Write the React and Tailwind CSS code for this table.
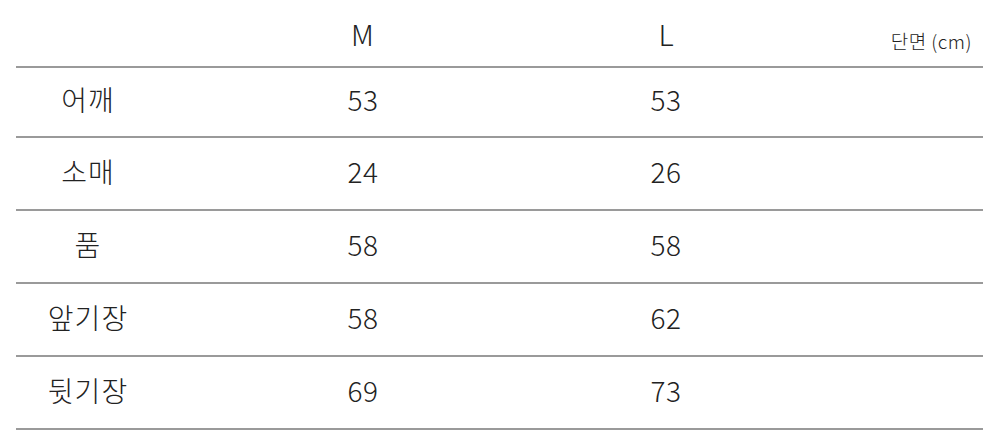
import React from 'react';

const rows = [
  { label: '어깨', m: '53', l: '53' },
  { label: '소매', m: '24', l: '26' },
  { label: '품', m: '58', l: '58' },
  { label: '앞기장', m: '58', l: '62' },
  { label: '뒷기장', m: '69', l: '73' },
];

const font = { fontFamily: '"Noto Sans CJK KR", "Noto Sans", sans-serif' };

const Rule = () => <div className="h-[2px] bg-[#9a9a9a]" />;

const App = () => {
  return (
    <div className="w-[1000px] h-[445px] bg-white text-[#222] font-light" style={font}>
      <div className="pl-[16px] pr-[17px]">
        {/* Header */}
        <div className="grid grid-cols-[144px_406px_200px_1fr] h-[66px] items-center">
          <div />
          <div className="text-center text-[29px] leading-none tracking-[1px]">M</div>
          <div className="text-center text-[29px] leading-none">L</div>
          <div className="text-right text-[19px] leading-none tracking-[0.5px] pr-[11px] pt-[14px]">단면 (cm)</div>
        </div>
        <Rule />

        {/* Rows */}
        {rows.map((row, i) => (
          <div key={row.label}>
            <div
              className={`grid grid-cols-[144px_406px_200px_1fr] items-center pb-[6px] ${
                i === 0 ? 'h-[68px]' : 'h-[71px]'
              }`}
            >
              <div className="text-center text-[28px] leading-none tracking-[1px]">{row.label}</div>
              <div className="text-center text-[28px] leading-none tracking-[0.5px]">{row.m}</div>
              <div className="text-center text-[28px] leading-none tracking-[0.5px]">{row.l}</div>
              <div />
            </div>
            <Rule />
          </div>
        ))}
      </div>
    </div>
  );
};

export default App;
